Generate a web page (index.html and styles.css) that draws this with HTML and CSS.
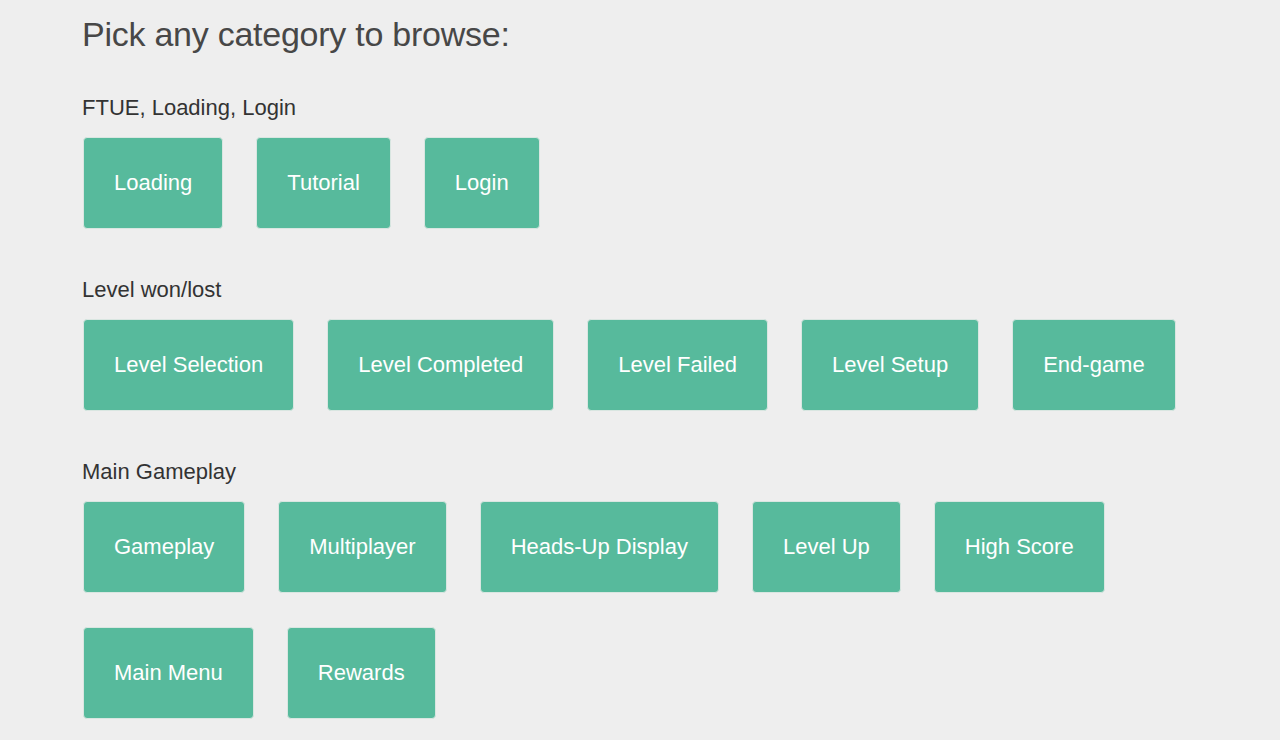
FILE: index.html
```html
<!DOCTYPE html>
<html lang="en">
<head>
    <meta charset="UTF-8">
    <meta name="viewport" content="width=device-width, initial-scale=1.0">
    <title>Browse categories</title>
    <link rel="stylesheet" href="styles.css">
</head>
<body>
    <div class="page">
        <h1>Pick any category to browse:</h1>

        <div class="section">
            <h3>FTUE, Loading, Login</h3>
            <div class="cats">
                <a class="cat" href="#">Loading</a>
                <a class="cat" href="#">Tutorial</a>
                <a class="cat" href="#">Login</a>
            </div>
        </div>

        <div class="section">
            <h3>Level won/lost</h3>
            <div class="cats">
                <a class="cat" href="#">Level Selection</a>
                <a class="cat" href="#">Level Completed</a>
                <a class="cat" href="#">Level Failed</a>
                <a class="cat" href="#">Level Setup</a>
                <a class="cat" href="#">End-game</a>
            </div>
        </div>

        <div class="section">
            <h3>Main Gameplay</h3>
            <div class="cats">
                <a class="cat" href="#">Gameplay</a>
                <a class="cat" href="#">Multiplayer</a>
                <a class="cat" href="#">Heads-Up Display</a>
                <a class="cat" href="#">Level Up</a>
                <a class="cat" href="#">High Score</a>
                <a class="cat" href="#">Main Menu</a>
                <a class="cat" href="#">Rewards</a>
            </div>
        </div>
    </div>
</body>
</html>
```

FILE: styles.css
```css
body {
    margin: 0;
    background: #eeeeee;
    font-family: 'Liberation Sans', Arial, sans-serif;
    color: #333;
}

.page {
    padding: 14px 82px 0 82px;
}

h1 {
    margin: 0 0 41px 0;
    font-size: 34px;
    line-height: 40px;
    font-weight: 300;
    color: #474747;
    letter-spacing: -0.25px;
}

.section {
    margin-bottom: 48px;
}

h3 {
    margin: 0 0 16px 0;
    font-size: 22px;
    line-height: 26px;
    font-weight: normal;
    color: #333;
}

.cats {
    display: flex;
    flex-wrap: wrap;
    gap: 34px 33px;
    padding-left: 1px;
}

.cat {
    display: block;
    padding: 32px 30px;
    font-size: 22px;
    line-height: 26px;
    color: #fff;
    text-decoration: none;
    background: #57ba9c;
    border: 1px solid #d9e6e1;
    border-radius: 4px;
}
```
